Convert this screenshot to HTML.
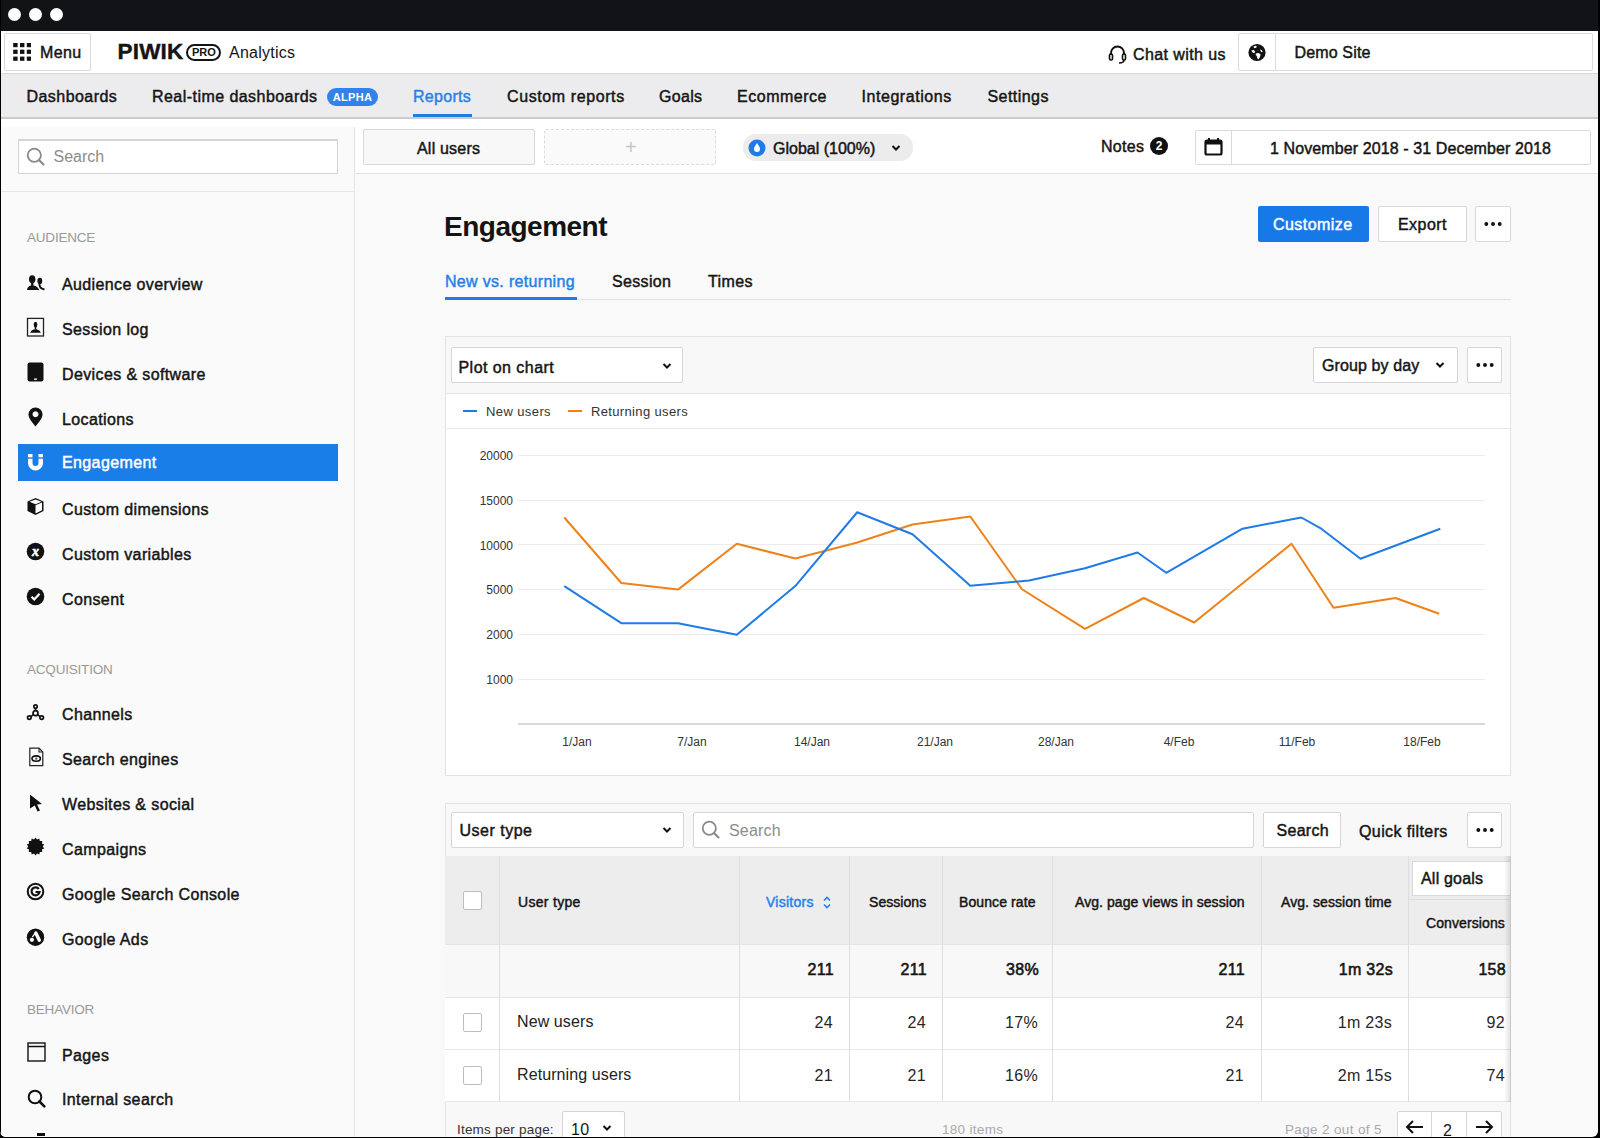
<!DOCTYPE html>
<html><head><meta charset="utf-8">
<style>
*{box-sizing:border-box;margin:0;padding:0}
html,body{width:1600px;height:1138px;overflow:hidden;background:#000}
body{font-family:"Liberation Sans",sans-serif;color:#151515;position:relative}
.a{position:absolute}
.m{-webkit-text-stroke:0.45px currentColor}
.win{position:absolute;left:0;top:0;width:1598px;height:1137px;background:#111317;border-radius:0 0 6px 6px;overflow:hidden}
.dot{position:absolute;top:8px;width:13px;height:13px;border-radius:50%;background:#fff}
.t{white-space:nowrap;line-height:1}
.btn{position:absolute;background:#fff;border:1px solid #d6d6d6;border-radius:2px}
</style></head>
<body>
<div class="win">
  <div class="a" style="left:0;top:0;width:1px;height:1138px;background:#000;z-index:9"></div>
  <div class="dot" style="left:8.3px;top:8.3px"></div>
  <div class="dot" style="left:28.5px;top:8.3px"></div>
  <div class="dot" style="left:49.7px;top:8.3px"></div>

  <!-- header -->
  <div class="a" style="left:0;top:31px;width:1598px;height:43px;background:#fff;border-bottom:1px solid #d9d9d9"></div>
  <div class="btn" style="left:4px;top:33px;width:87px;height:38px;border-color:#dadada"></div>
  <svg class="a" style="left:12px;top:43px" width="19" height="18" viewBox="0 0 19 18">
    <g fill="#111"><rect x="1.2" y="0" width="4.4" height="4.2"/><rect x="8" y="0" width="4.4" height="4.2"/><rect x="14.8" y="0" width="4.4" height="4.2"/>
    <rect x="1.2" y="6.7" width="4.4" height="4.2"/><rect x="8" y="6.7" width="4.4" height="4.2"/><rect x="14.8" y="6.7" width="4.4" height="4.2"/>
    <rect x="1.2" y="13.6" width="4.4" height="4.2"/><rect x="8" y="13.6" width="4.4" height="4.2"/><rect x="14.8" y="13.6" width="4.4" height="4.2"/></g>
  </svg>
  <div class="a t m" style="left:40px;top:45px;font-size:16px;letter-spacing:0.35px">Menu</div>
  <div class="a t" style="left:117.5px;top:40.5px;font-size:22.5px;font-weight:bold;letter-spacing:0.2px;color:#141414;-webkit-text-stroke:0.4px #141414">PIWIK</div>
  <div class="a" style="left:186px;top:44px;width:35px;height:17px;border:2.5px solid #141414;border-radius:9px"></div>
  <div class="a t" style="left:192px;top:47px;font-size:11px;font-weight:bold;color:#141414">PRO</div>
  <div class="a t" style="left:229px;top:45px;font-size:16px;letter-spacing:0.25px">Analytics</div>

  <!-- chat -->
  <svg class="a" style="left:1108px;top:45px" width="19" height="19" viewBox="0 0 19 19">
    <path d="M3 10 V8 a6.5 6.5 0 0 1 13 0 V10" fill="none" stroke="#111" stroke-width="2"/>
    <rect x="1.5" y="9" width="3" height="6" rx="1.2" fill="none" stroke="#111" stroke-width="1.6"/>
    <rect x="14.5" y="9" width="3" height="6" rx="1.2" fill="none" stroke="#111" stroke-width="1.6"/>
    <path d="M16 15 q0 3 -5 3" fill="none" stroke="#111" stroke-width="1.6"/>
  </svg>
  <div class="a t m" style="left:1133px;top:47px;font-size:16px;letter-spacing:0.4px">Chat with us</div>
  <div class="btn" style="left:1238px;top:33px;width:355px;height:38px;border-color:#dcdcdc"></div>
  <div class="a" style="left:1275px;top:34px;width:1px;height:36px;background:#dcdcdc"></div>
  <svg class="a" style="left:1248px;top:42.5px" width="18" height="19" viewBox="0 0 18 19">
    <circle cx="9" cy="9.5" r="8.6" fill="#111"/>
    <path d="M5.5 3.5 l2 -0.8 l1.5 0.8 l-1 1.3 l-1.8 0.4 z M3.2 7.5 l2.3 -0.6 l1.5 1.3 l-0.2 1.6 l-1.8 0.2 z M7.8 10.5 l2.6 -0.4 l2.2 1.2 l-0.6 2.6 l-1.6 2.6 l-1.2 -1.4 l-0.4 -2.2 l-1.2 -1.2 z M12 6.5 l1.6 0.4 l1.2 1.8 l-1.6 0.5 z" fill="#fff"/>
  </svg>
  <div class="a t m" style="left:1294.5px;top:45px;font-size:16px;letter-spacing:0.15px">Demo Site</div>

  <!-- nav -->
  <div class="a" style="left:0;top:74px;width:1598px;height:45px;background:#ececee;border-bottom:2px solid #cbcbcd"></div>
  <div class="a t m" style="left:26.5px;top:89px;font-size:16px;letter-spacing:0.45px">Dashboards</div>
  <div class="a t m" style="left:152px;top:89px;font-size:16px;letter-spacing:0.45px">Real-time dashboards</div>
  <div class="a t" style="left:327px;top:88px;width:51px;height:18px;border-radius:9px;background:#3382e8;color:#fff;font-size:11px;font-weight:bold;text-align:center;line-height:18px;letter-spacing:0.3px">ALPHA</div>
  <div class="a t m" style="left:413px;top:89px;font-size:16px;letter-spacing:0.3px;color:#2a80e6">Reports</div>
  <div class="a" style="left:413px;top:114px;width:59px;height:3px;background:#1f7be6"></div>
  <div class="a t m" style="left:507px;top:89px;font-size:16px;letter-spacing:0.6px">Custom reports</div>
  <div class="a t m" style="left:659px;top:89px;font-size:16px;letter-spacing:0.3px">Goals</div>
  <div class="a t m" style="left:737px;top:89px;font-size:16px;letter-spacing:0.52px">Ecommerce</div>
  <div class="a t m" style="left:861.5px;top:89px;font-size:16px;letter-spacing:0.55px">Integrations</div>
  <div class="a t m" style="left:987.5px;top:89px;font-size:16px;letter-spacing:0.45px">Settings</div>

  <!-- content bg -->
  <div class="a" style="left:0;top:119px;width:1598px;height:1018px;background:#f9f9f9"></div>
  <div class="a" style="left:0;top:119px;width:1598px;height:8px;background:#fff"></div>
  <!-- sidebar -->
  <div class="a" style="left:0;top:127px;width:355px;height:1010px;background:#fafafa;border-right:1px solid #e4e4e4"></div>
  <div class="a" style="left:0;top:191px;width:354px;height:1px;background:#e6e6e6"></div>
  <div class="a" style="left:18px;top:139px;width:320px;height:35px;background:#fff;border:1px solid #d4d4d4;border-top-width:2px"></div>
  <svg class="a" style="left:26px;top:147px" width="20" height="20" viewBox="0 0 20 20">
    <circle cx="8.3" cy="8.3" r="6.6" fill="none" stroke="#8a8a8a" stroke-width="1.8"/>
    <path d="M13 13 L17.5 17.5" stroke="#8a8a8a" stroke-width="2.2" stroke-linecap="round"/>
  </svg>
  <div class="a t" style="left:53.5px;top:149px;font-size:16px;color:#8c8c8c;letter-spacing:0px">Search</div>

  
  <div class="a t" style="left:27px;top:231px;font-size:13.5px;color:#999;letter-spacing:-0.2px">AUDIENCE</div>
  <svg class="a" style="left:26px;top:275px" width="20" height="16" viewBox="0 0 20 16">
    <g fill="#111"><ellipse cx="6.2" cy="4.3" rx="3.2" ry="4"/><rect x="5.1" y="7.5" width="2.3" height="3.5"/>
    <path d="M1 15 Q1.5 11.4 5 10.6 L7.5 10.6 Q11.8 11.4 13.1 15z"/>
    <ellipse cx="13.8" cy="6.1" rx="2.4" ry="3.3"/></g>
    <path d="M13.4 9.6 Q14 13.6 17.8 14.2" fill="none" stroke="#111" stroke-width="1.9" stroke-linecap="round"/>
  </svg>
  <div class="a t m" style="left:62px;top:277px;font-size:16px;letter-spacing:0.38px">Audience overview</div>
  <svg class="a" style="left:26px;top:317px" width="19" height="20" viewBox="0 0 19 20">
    <rect x="1.5" y="1.4" width="16" height="17.6" fill="none" stroke="#222" stroke-width="1.3"/>
    <ellipse cx="9.5" cy="7.6" rx="1.8" ry="2.8" fill="#111"/><rect x="8.7" y="9.5" width="1.6" height="3" fill="#111"/>
    <path d="M4.1 15.8 Q5 13 8.5 12.3 L10.5 12.3 Q14 13 14.9 15.8z" fill="#111"/>
  </svg>
  <div class="a t m" style="left:62px;top:322px;font-size:16px;letter-spacing:0.38px">Session log</div>
  <svg class="a" style="left:27px;top:362px" width="17" height="20" viewBox="0 0 17 20">
    <rect x="0.5" y="0.5" width="16" height="19" rx="2" fill="#111"/><rect x="7" y="16.5" width="3" height="1.3" fill="#fafafa"/>
  </svg>
  <div class="a t m" style="left:62px;top:367px;font-size:16px;letter-spacing:0.38px">Devices &amp; software</div>
  <svg class="a" style="left:28px;top:407px" width="15" height="20" viewBox="0 0 15 20">
    <path d="M7.5 0.5 a7 7 0 0 1 7 7 c0 4 -4 8 -7 12 c-3 -4 -7 -8 -7 -12 a7 7 0 0 1 7 -7z M7.5 4.3 a3 3 0 1 0 0.01 0z" fill="#111" fill-rule="evenodd"/>
  </svg>
  <div class="a t m" style="left:62px;top:412px;font-size:16px;letter-spacing:0.38px">Locations</div>

  <div class="a" style="left:18px;top:444px;width:320px;height:37px;background:#1a7ee9"></div>
  <svg class="a" style="left:27px;top:454px" width="17" height="18" viewBox="0 0 17 18">
    <path d="M1 0 h4.5 v9 a3 3 0 0 0 6 0 v-9 h4.5 v9 a7.5 7.5 0 0 1 -15 0z" fill="#fff"/>
    <rect x="0" y="3.3" width="17" height="1.4" fill="#1a7ee9"/>
  </svg>
  <div class="a t m" style="left:62px;top:455px;font-size:16px;letter-spacing:0.38px;color:#fff">Engagement</div>

  <svg class="a" style="left:26px;top:497px" width="19" height="19" viewBox="0 0 19 19">
    <path d="M9.5 1 L17.5 4.5 V14 L9.5 18 L1.5 14 V4.5z" fill="#111"/>
    <path d="M9.5 8.2 L16 5.5 V13.3 L9.5 16.5z" fill="#fff"/>
    <path d="M3.5 4.8 L9.5 2.5 L15.5 4.8 L9.5 7.3z" fill="#fff"/>
  </svg>
  <div class="a t m" style="left:62px;top:502px;font-size:16px;letter-spacing:0.38px">Custom dimensions</div>
  <svg class="a" style="left:26px;top:542px" width="19" height="19" viewBox="0 0 19 19">
    <circle cx="9.5" cy="9.5" r="8.8" fill="#111"/>
    <text x="9.5" y="13.8" font-family="Liberation Serif" font-style="italic" font-weight="bold" font-size="14" fill="#fff" stroke="#fff" stroke-width="0.6" text-anchor="middle">x</text>
  </svg>
  <div class="a t m" style="left:62px;top:547px;font-size:16px;letter-spacing:0.38px">Custom variables</div>
  <svg class="a" style="left:26px;top:587px" width="19" height="19" viewBox="0 0 19 19">
    <circle cx="9.5" cy="9.5" r="8.8" fill="#111"/>
    <path d="M5.5 9.8 L8.2 12.4 L13.6 6.8" fill="none" stroke="#fff" stroke-width="2.2"/>
  </svg>
  <div class="a t m" style="left:62px;top:592px;font-size:16px;letter-spacing:0.38px">Consent</div>

  <div class="a t" style="left:27px;top:663px;font-size:13.5px;color:#999;letter-spacing:-0.2px">ACQUISITION</div>
  <svg class="a" style="left:26px;top:704px" width="19" height="17" viewBox="0 0 19 17">
    <g fill="none" stroke="#111" stroke-width="1.7"><circle cx="9.5" cy="2.6" r="1.7"/><circle cx="9.5" cy="9.2" r="2.5"/><circle cx="3.3" cy="13.6" r="1.8"/><circle cx="15.7" cy="13.6" r="1.8"/>
    <path d="M9.5 4.3 V6.7 M7.5 10.6 L4.8 12.6 M11.5 10.6 L14.2 12.6"/></g>
  </svg>
  <div class="a t m" style="left:62px;top:707px;font-size:16px;letter-spacing:0.38px">Channels</div>
  <svg class="a" style="left:28px;top:747px" width="16" height="20" viewBox="0 0 16 20">
    <path d="M1.8 1.2 H11 L14.8 5 V18.6 H1.8z" fill="none" stroke="#222" stroke-width="1.2"/>
    <path d="M11 1.2 V5 H14.8" fill="none" stroke="#222" stroke-width="1.1"/>
    <ellipse cx="8.2" cy="11.6" rx="4.2" ry="2.7" fill="none" stroke="#111" stroke-width="1.6"/><circle cx="8.2" cy="11.6" r="1.2" fill="#555"/>
  </svg>
  <div class="a t m" style="left:62px;top:752px;font-size:16px;letter-spacing:0.38px">Search engines</div>
  <svg class="a" style="left:29px;top:794px" width="14" height="18" viewBox="0 0 14 18">
    <path d="M1 0.5 L13 10 L8 10.5 L11 16.5 L8.5 17.5 L5.8 11.5 L1 14.5z" fill="#111"/>
  </svg>
  <div class="a t m" style="left:62px;top:797px;font-size:16px;letter-spacing:0.38px">Websites &amp; social</div>
  <svg class="a" style="left:26px;top:837px" width="19" height="19" viewBox="0 0 19 19">
    <path d="M9.5 0.5 L11 2.4 L13.3 1.4 L13.8 3.9 L16.3 4 L15.9 6.4 L18.2 7.6 L16.7 9.5 L18.2 11.4 L15.9 12.6 L16.3 15 L13.8 15.1 L13.3 17.6 L11 16.6 L9.5 18.5 L8 16.6 L5.7 17.6 L5.2 15.1 L2.7 15 L3.1 12.6 L0.8 11.4 L2.3 9.5 L0.8 7.6 L3.1 6.4 L2.7 4 L5.2 3.9 L5.7 1.4 L8 2.4z" fill="#111"/>
  </svg>
  <div class="a t m" style="left:62px;top:842px;font-size:16px;letter-spacing:0.38px">Campaigns</div>
  <svg class="a" style="left:26px;top:882px" width="19" height="19" viewBox="0 0 19 19">
    <circle cx="9.5" cy="9.5" r="7.8" fill="none" stroke="#111" stroke-width="2"/>
    <path d="M12.8 7 A4 4 0 1 0 13.5 10 H9.5" fill="none" stroke="#111" stroke-width="2.2"/>
  </svg>
  <div class="a t m" style="left:62px;top:887px;font-size:16px;letter-spacing:0.38px">Google Search Console</div>
  <svg class="a" style="left:26px;top:927.5px" width="19" height="19" viewBox="0 0 19 19">
    <circle cx="9.5" cy="9.2" r="8.7" fill="#111"/>
    <path d="M9.8 5 L13.3 12.3" stroke="#fff" stroke-width="3.4" stroke-linecap="round"/>
    <path d="M9.3 5.2 L6.6 8.6" stroke="#fff" stroke-width="1.3" stroke-linecap="round"/>
    <circle cx="5.9" cy="11.8" r="2.1" fill="#fff"/>
  </svg>
  <div class="a t m" style="left:62px;top:932px;font-size:16px;letter-spacing:0.38px">Google Ads</div>

  <div class="a t" style="left:27px;top:1003px;font-size:13.5px;color:#999;letter-spacing:-0.2px">BEHAVIOR</div>
  <svg class="a" style="left:27px;top:1042px" width="19" height="20" viewBox="0 0 19 20">
    <rect x="1" y="1" width="17" height="18" fill="none" stroke="#111" stroke-width="1.4"/><path d="M1 4.5 H18" stroke="#111" stroke-width="1.3"/>
  </svg>
  <div class="a t m" style="left:62px;top:1048px;font-size:16px;letter-spacing:0.38px">Pages</div>
  <svg class="a" style="left:27px;top:1089px" width="19" height="19" viewBox="0 0 19 19">
    <circle cx="8" cy="8" r="6.3" fill="none" stroke="#111" stroke-width="2"/><path d="M12.5 12.5 L17.3 17.3" stroke="#111" stroke-width="2.6" stroke-linecap="round"/>
  </svg>
  <div class="a t m" style="left:62px;top:1092px;font-size:16px;letter-spacing:0.38px">Internal search</div>
  <div class="a" style="left:37px;top:1133px;width:8px;height:3px;background:#111"></div>


  <!-- segment bar -->
  <div class="a" style="left:356px;top:126px;width:1242px;height:48px;background:#fff;border-bottom:1px solid #e1e1e1"></div>
  <div class="a" style="left:363px;top:129px;width:172px;height:36px;background:#f8f8f8;border:1px solid #d9d9d9;border-radius:2px"></div>
  <div class="a t m" style="left:417px;top:141px;font-size:16px;letter-spacing:0.2px">All users</div>
  <div class="a" style="left:544px;top:129px;width:172px;height:36px;background:#fafafa;border:1px dashed #dcdcdc;border-radius:2px"></div>
  <div class="a t" style="left:625px;top:137px;font-size:20px;color:#c6c6c6">+</div>
  <div class="a" style="left:743px;top:134px;width:170px;height:27px;background:#ececec;border-radius:13px"></div>
  <svg class="a" style="left:747.5px;top:138.7px" width="18" height="18" viewBox="0 0 18 18">
    <circle cx="9" cy="9" r="8.5" fill="#1f7be6"/>
    <path d="M9 4 C7.5 6.5 6 8 6 10 a3 3 0 0 0 6 0 C12 8 10.5 6.5 9 4z" fill="#fff"/>
  </svg>
  <div class="a t m" style="left:773px;top:141px;font-size:16px">Global (100%)</div>
  <svg class="a" style="left:891px;top:144px" width="10" height="8" viewBox="0 0 10 8"><path d="M1.5 2 L5 5.5 L8.5 2" fill="none" stroke="#111" stroke-width="2"/></svg>
  <div class="a t m" style="left:1101px;top:139px;font-size:16px;letter-spacing:0.3px">Notes</div>
  <div class="a t" style="left:1150px;top:137px;width:18px;height:18px;border-radius:50%;background:#111;color:#fff;font-size:12px;font-weight:bold;text-align:center;line-height:18px">2</div>
  <div class="btn" style="left:1195px;top:130px;width:396px;height:35px;border-color:#dadada"></div>
  <div class="a" style="left:1231px;top:131px;width:1px;height:33px;background:#dadada"></div>
  <svg class="a" style="left:1204px;top:137px" width="19" height="20" viewBox="0 0 19 20">
    <rect x="1.5" y="3.5" width="16" height="14" rx="1.5" fill="none" stroke="#111" stroke-width="2.2"/>
    <rect x="1.5" y="3.5" width="16" height="4" fill="#111"/>
    <rect x="4" y="1" width="2" height="4" fill="#111"/><rect x="13" y="1" width="2" height="4" fill="#111"/>
  </svg>
  <div class="a t m" style="left:1270px;top:141px;font-size:16px;letter-spacing:0.1px">1 November 2018 - 31 December 2018</div>

  
  <!-- page header -->
  <div class="a t" style="left:444px;top:213px;font-size:28px;font-weight:bold;letter-spacing:-0.5px;color:#141414">Engagement</div>
  <div class="a" style="left:1258px;top:206px;width:111px;height:36px;background:#1779e8;border-radius:2px"></div>
  <div class="a t m" style="left:1273px;top:217px;font-size:16px;color:#fff;letter-spacing:0.45px">Customize</div>
  <div class="btn" style="left:1378px;top:206px;width:89px;height:36px;border-color:#d9d9d9"></div>
  <div class="a t m" style="left:1398px;top:217px;font-size:16px;letter-spacing:0.45px">Export</div>
  <div class="btn" style="left:1475px;top:206px;width:36px;height:36px;border-color:#d9d9d9"></div>
  <svg class="a" style="left:1482.5px;top:221px" width="20" height="6" viewBox="0 0 20 6"><g fill="#111"><circle cx="3.3" cy="3" r="1.95"/><circle cx="10" cy="3" r="1.95"/><circle cx="16.7" cy="3" r="1.95"/></g></svg>

  <!-- tabs -->
  <div class="a" style="left:445px;top:299px;width:1066px;height:1px;background:#e0e0e0"></div>
  <div class="a t m" style="left:445px;top:274px;font-size:16px;letter-spacing:0.32px;color:#2680e8">New vs. returning</div>
  <div class="a" style="left:445px;top:297px;width:132px;height:3px;background:#1f7be6"></div>
  <div class="a t m" style="left:612px;top:274px;font-size:16px;letter-spacing:0.35px">Session</div>
  <div class="a t m" style="left:708px;top:274px;font-size:16px;letter-spacing:0.4px">Times</div>

  <!-- chart panel -->
  <div class="a" style="left:445px;top:336px;width:1066px;height:440px;background:#fff;border:1px solid #e3e3e3"></div>
  <div class="a" style="left:446px;top:337px;width:1064px;height:57px;background:#f8f8f8;border-bottom:1px solid #e6e6e6"></div>
  <div class="btn" style="left:451px;top:347px;width:232px;height:36px;border-color:#d6d6d6"></div>
  <div class="a t m" style="left:458.5px;top:360px;font-size:16px;letter-spacing:0.45px">Plot on chart</div>
  <svg class="a" style="left:662px;top:362px" width="10" height="8" viewBox="0 0 10 8"><path d="M1.5 2 L5 5.5 L8.5 2" fill="none" stroke="#111" stroke-width="2"/></svg>
  <div class="btn" style="left:1313px;top:347px;width:145px;height:36px;border-color:#d6d6d6"></div>
  <div class="a t m" style="left:1322px;top:358px;font-size:16px;letter-spacing:0.1px">Group by day</div>
  <svg class="a" style="left:1435px;top:361px" width="10" height="8" viewBox="0 0 10 8"><path d="M1.5 2 L5 5.5 L8.5 2" fill="none" stroke="#111" stroke-width="2"/></svg>
  <div class="btn" style="left:1467px;top:347px;width:35px;height:36px;border-color:#d6d6d6"></div>
  <svg class="a" style="left:1474.5px;top:362px" width="20" height="6" viewBox="0 0 20 6"><g fill="#111"><circle cx="3.3" cy="3" r="1.95"/><circle cx="10" cy="3" r="1.95"/><circle cx="16.7" cy="3" r="1.95"/></g></svg>
  <div class="a" style="left:445px;top:428px;width:1065px;height:1px;background:#e8e8e8"></div>
  <div class="a" style="left:463px;top:410px;width:14px;height:2px;background:#1f7be6"></div>
  <div class="a t" style="left:486px;top:405px;font-size:13px;color:#333;letter-spacing:0.4px">New users</div>
  <div class="a" style="left:568px;top:410px;width:14px;height:2px;background:#ee8219"></div>
  <div class="a t" style="left:591px;top:405px;font-size:13px;color:#333;letter-spacing:0.35px">Returning users</div>

  <svg class="a" style="left:0;top:0" width="1596" height="1135" viewBox="0 0 1596 1135">
    <g stroke="#ececec" stroke-width="1">
      <path d="M518 455.5 H1485 M518 500.5 H1485 M518 544.5 H1485 M518 589.5 H1485 M518 634.5 H1485 M518 679.5 H1485"/>
    </g>
    <path d="M518 724 H1485" stroke="#d9d9d9" stroke-width="2"/>
    <g font-family="Liberation Sans" font-size="12" fill="#333" text-anchor="end">
      <text x="513" y="460">20000</text><text x="513" y="505">15000</text><text x="513" y="550">10000</text>
      <text x="513" y="594">5000</text><text x="513" y="639">2000</text><text x="513" y="684">1000</text>
    </g>
    <g font-family="Liberation Sans" font-size="12" fill="#333" text-anchor="middle">
      <text x="577" y="746">1/Jan</text><text x="692" y="746">7/Jan</text><text x="812" y="746">14/Jan</text><text x="935" y="746">21/Jan</text>
      <text x="1056" y="746">28/Jan</text><text x="1179" y="746">4/Feb</text><text x="1297" y="746">11/Feb</text><text x="1422" y="746">18/Feb</text>
    </g>
    <polyline fill="none" stroke="#ee8219" stroke-width="2" stroke-linejoin="round" points="564.3,517.5 621.3,583 678,589.6 736.8,543.8 795.3,558.5 856.5,542.7 912.5,524.5 970.3,516.5 1022,589.25 1085,628.8 1143.8,598 1194.2,622.5 1291.5,543.75 1333.5,607.8 1395.5,598 1439.2,613.75"/>
    <polyline fill="none" stroke="#1f7be6" stroke-width="2" stroke-linejoin="round" points="564.3,586.1 621.3,623.2 678,623.2 736.8,634.8 795.3,586.1 857.2,512.25 912.5,534.3 970.3,585.75 1029,580.5 1085,568.25 1137.5,552.5 1166.2,572.8 1242.5,528.7 1301.3,517.5 1321.25,528.7 1360.5,558.8 1440.3,528.7"/>
  </svg>

  <!-- table panel -->
  
  <div class="a" style="left:445px;top:803px;width:1066px;height:340px;background:#f8f8f8;border:1px solid #e3e3e3"></div>
  <div class="btn" style="left:451px;top:812px;width:233px;height:36px;border-color:#d6d6d6"></div>
  <div class="a t m" style="left:459.5px;top:823px;font-size:16px;letter-spacing:0.5px">User type</div>
  <svg class="a" style="left:662px;top:826px" width="10" height="8" viewBox="0 0 10 8"><path d="M1.5 2 L5 5.5 L8.5 2" fill="none" stroke="#111" stroke-width="2"/></svg>
  <div class="btn" style="left:693px;top:812px;width:561px;height:36px;border-color:#d6d6d6"></div>
  <svg class="a" style="left:701px;top:820px" width="20" height="20" viewBox="0 0 20 20">
    <circle cx="8.3" cy="8.3" r="6.6" fill="none" stroke="#8a8a8a" stroke-width="1.8"/>
    <path d="M13 13 L17.5 17.5" stroke="#8a8a8a" stroke-width="2.2" stroke-linecap="round"/>
  </svg>
  <div class="a t" style="left:729px;top:823px;font-size:16px;color:#8c8c8c;letter-spacing:0.2px">Search</div>
  <div class="btn" style="left:1263px;top:812px;width:78px;height:36px;border-color:#d6d6d6"></div>
  <div class="a t m" style="left:1276.5px;top:823px;font-size:16px;letter-spacing:0.3px">Search</div>
  <div class="a t m" style="left:1359px;top:824px;font-size:16px;letter-spacing:0.4px">Quick filters</div>
  <div class="btn" style="left:1467px;top:812px;width:35px;height:36px;border-color:#d6d6d6"></div>
  <svg class="a" style="left:1474.5px;top:827px" width="20" height="6" viewBox="0 0 20 6"><g fill="#111"><circle cx="3.3" cy="3" r="1.95"/><circle cx="10" cy="3" r="1.95"/><circle cx="16.7" cy="3" r="1.95"/></g></svg>

  <div class="a" style="left:445px;top:856px;width:1065px;height:88px;background:#ededed"></div>
  <div class="a" style="left:445px;top:944px;width:1065px;height:53px;background:#f8f8f8;border-top:1px solid #e6e6e6"></div>
  <div class="a" style="left:445px;top:997px;width:1065px;height:52px;background:#fff;border-top:1px solid #e8e8e8"></div>
  <div class="a" style="left:445px;top:1049px;width:1065px;height:53px;background:#fff;border-top:1px solid #e8e8e8;border-bottom:1px solid #e8e8e8"></div>
  <div class="a" style="left:499px;top:856px;width:1px;height:246px;background:#dedede"></div>
  <div class="a" style="left:739px;top:856px;width:1px;height:246px;background:#dedede"></div>
  <div class="a" style="left:849px;top:856px;width:1px;height:246px;background:#dedede"></div>
  <div class="a" style="left:942px;top:856px;width:1px;height:246px;background:#dedede"></div>
  <div class="a" style="left:1052px;top:856px;width:1px;height:246px;background:#dedede"></div>
  <div class="a" style="left:1261px;top:856px;width:1px;height:246px;background:#dedede"></div>
  <div class="a" style="left:1408px;top:856px;width:1px;height:246px;background:#dedede"></div>
  <div class="a" style="left:463px;top:891px;width:19px;height:19px;background:#fff;border:1px solid #bdbdbd;border-radius:2px"></div>
  <div class="a t m" style="left:518px;top:895px;font-size:14px;letter-spacing:0.3px">User type</div>
  <div class="a t m" style="left:766px;top:895px;font-size:14px;letter-spacing:0.25px;color:#2680e8">Visitors</div>
  <svg class="a" style="left:822px;top:895px" width="10" height="15" viewBox="0 0 10 15"><path d="M2 5.5 L5 2.5 L8 5.5 M2 9.5 L5 12.5 L8 9.5" fill="none" stroke="#2680e8" stroke-width="1.6"/></svg>
  <div class="a t m" style="left:869px;top:895px;font-size:14px;letter-spacing:0.05px">Sessions</div>
  <div class="a t m" style="left:959px;top:895px;font-size:14px;letter-spacing:0.1px">Bounce rate</div>
  <div class="a t m" style="left:1075px;top:895px;font-size:14px;letter-spacing:0.07px">Avg. page views in session</div>
  <div class="a t m" style="left:1281px;top:895px;font-size:14px;letter-spacing:0.07px">Avg. session time</div>
  <div class="a" style="left:1409px;top:856px;width:101px;height:44px;background:#ededed;border-bottom:1px solid #dcdcdc"></div>
  <div class="a" style="left:1412px;top:861px;width:98px;height:35px;background:#fff;border:1px solid #dadada;border-right:none"></div>
  <div class="a t m" style="left:1421px;top:871px;font-size:16px;letter-spacing:0.2px">All goals</div>
  <div class="a t m" style="left:1426px;top:916px;font-size:14px;letter-spacing:0.1px">Conversions</div>
  <div class="a" style="left:1504px;top:856px;width:7px;height:246px;background:linear-gradient(to right,rgba(0,0,0,0),rgba(0,0,0,0.12))"></div>
  <div class="a t m" style="right:764px;top:962px;font-size:16px;letter-spacing:0.3px;-webkit-text-stroke:0.55px currentColor;">211</div>
  <div class="a t m" style="right:671px;top:962px;font-size:16px;letter-spacing:0.3px;-webkit-text-stroke:0.55px currentColor;">211</div>
  <div class="a t m" style="right:559px;top:962px;font-size:16px;letter-spacing:0.3px;-webkit-text-stroke:0.55px currentColor;">38%</div>
  <div class="a t m" style="right:353px;top:962px;font-size:16px;letter-spacing:0.3px;-webkit-text-stroke:0.55px currentColor;">211</div>
  <div class="a t m" style="right:205px;top:962px;font-size:16px;letter-spacing:0.3px;-webkit-text-stroke:0.55px currentColor;">1m 32s</div>
  <div class="a t m" style="right:92px;top:962px;font-size:16px;letter-spacing:0.3px;-webkit-text-stroke:0.55px currentColor;">158</div>
  <div class="a" style="left:463px;top:1013px;width:19px;height:19px;background:#fff;border:1px solid #bdbdbd;border-radius:2px"></div>
  <div class="a t" style="left:517px;top:1014px;font-size:16px;letter-spacing:0.1px;color:#222">New users</div>
  <div class="a t" style="right:765px;top:1015px;font-size:16px;letter-spacing:0.3px;color:#262626">24</div>
  <div class="a t" style="right:672px;top:1015px;font-size:16px;letter-spacing:0.3px;color:#262626">24</div>
  <div class="a t" style="right:560px;top:1015px;font-size:16px;letter-spacing:0.3px;color:#262626">17%</div>
  <div class="a t" style="right:354px;top:1015px;font-size:16px;letter-spacing:0.3px;color:#262626">24</div>
  <div class="a t" style="right:206px;top:1015px;font-size:16px;letter-spacing:0.3px;color:#262626">1m 23s</div>
  <div class="a t" style="right:93px;top:1015px;font-size:16px;letter-spacing:0.3px;color:#262626">92</div>
  <div class="a" style="left:463px;top:1066px;width:19px;height:19px;background:#fff;border:1px solid #bdbdbd;border-radius:2px"></div>
  <div class="a t" style="left:517px;top:1067px;font-size:16px;letter-spacing:0.1px;color:#222">Returning users</div>
  <div class="a t" style="right:765px;top:1068px;font-size:16px;letter-spacing:0.3px;color:#262626">21</div>
  <div class="a t" style="right:672px;top:1068px;font-size:16px;letter-spacing:0.3px;color:#262626">21</div>
  <div class="a t" style="right:560px;top:1068px;font-size:16px;letter-spacing:0.3px;color:#262626">16%</div>
  <div class="a t" style="right:354px;top:1068px;font-size:16px;letter-spacing:0.3px;color:#262626">21</div>
  <div class="a t" style="right:206px;top:1068px;font-size:16px;letter-spacing:0.3px;color:#262626">2m 15s</div>
  <div class="a t" style="right:93px;top:1068px;font-size:16px;letter-spacing:0.3px;color:#262626">74</div>

  <div class="a t" style="left:457px;top:1123px;font-size:13.5px;color:#333;letter-spacing:0.2px">Items per page:</div>
  <div class="btn" style="left:562px;top:1111px;width:63px;height:36px;border-color:#d6d6d6"></div>
  <div class="a t" style="left:571px;top:1122px;font-size:16px;letter-spacing:0.3px">10</div>
  <svg class="a" style="left:602px;top:1124px" width="10" height="8" viewBox="0 0 10 8"><path d="M1.5 2 L5 5.5 L8.5 2" fill="none" stroke="#111" stroke-width="2"/></svg>
  <div class="a t" style="left:942px;top:1123px;font-size:13.5px;color:#aaa;letter-spacing:0.3px">180 items</div>
  <div class="a t" style="left:1285px;top:1123px;font-size:13.5px;color:#aaa;letter-spacing:0.35px">Page 2 out of 5</div>
  <div class="btn" style="left:1397px;top:1111px;width:105px;height:36px;border-color:#d6d6d6"></div>
  <div class="a" style="left:1431px;top:1112px;width:1px;height:34px;background:#d6d6d6"></div>
  <div class="a" style="left:1466px;top:1112px;width:1px;height:34px;background:#d6d6d6"></div>
  <svg class="a" style="left:1405px;top:1120px" width="19" height="14" viewBox="0 0 19 14"><path d="M18 7 H2 M8 1 L2 7 L8 13" fill="none" stroke="#111" stroke-width="2"/></svg>
  <svg class="a" style="left:1475px;top:1120px" width="19" height="14" viewBox="0 0 19 14"><path d="M1 7 H17 M11 1 L17 7 L11 13" fill="none" stroke="#111" stroke-width="2"/></svg>
  <div class="a t" style="left:1443px;top:1123px;font-size:16px">2</div>


</div>
</body></html>
